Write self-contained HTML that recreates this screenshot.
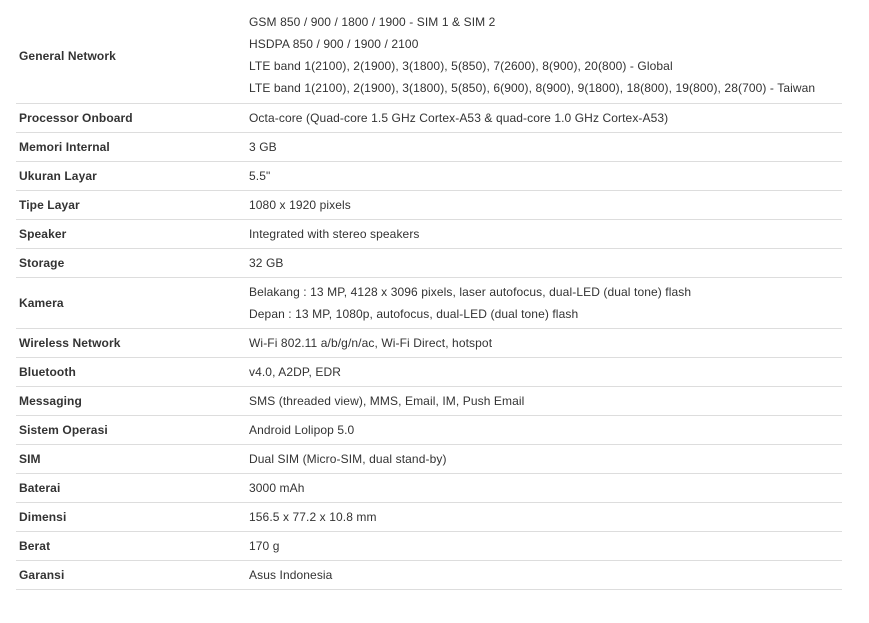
<!DOCTYPE html>
<html><head><style>
body{margin:0;background:#fff;font-family:"Liberation Sans",Arial,sans-serif;font-size:12px;color:#333}
table{position:absolute;left:16px;top:0;width:826px;border-collapse:collapse;font-size:12px;table-layout:fixed;letter-spacing:0.1px}
td{border-bottom:1px solid #ddd;padding:0 0 0 3px;height:28px;vertical-align:middle;white-space:nowrap;box-sizing:border-box}
td.k{font-weight:bold;width:230px}
.m{line-height:22px}
</style></head><body>
<table>
<tr><td class="k" style="height:103px;padding-top:10px">General Network</td><td class="m" style="height:103px;padding-top:8px">GSM 850 / 900 / 1800 / 1900 - SIM 1 &amp; SIM 2<br>HSDPA 850 / 900 / 1900 / 2100<br>LTE band 1(2100), 2(1900), 3(1800), 5(850), 7(2600), 8(900), 20(800) - Global<br>LTE band 1(2100), 2(1900), 3(1800), 5(850), 6(900), 8(900), 9(1800), 18(800), 19(800), 28(700) - Taiwan</td></tr>
<tr><td class="k" style="height:29px">Processor Onboard</td><td style="height:29px">Octa-core (Quad-core 1.5 GHz Cortex-A53 &amp; quad-core 1.0 GHz Cortex-A53)</td></tr>
<tr><td class="k" style="height:29px">Memori Internal</td><td style="height:29px">3 GB</td></tr>
<tr><td class="k" style="height:29px">Ukuran Layar</td><td style="height:29px">5.5"</td></tr>
<tr><td class="k" style="height:29px">Tipe Layar</td><td style="height:29px">1080 x 1920 pixels</td></tr>
<tr><td class="k" style="height:29px">Speaker</td><td style="height:29px">Integrated with stereo speakers</td></tr>
<tr><td class="k" style="height:29px">Storage</td><td style="height:29px">32 GB</td></tr>
<tr><td class="k" style="height:51px">Kamera</td><td class="m" style="height:51px">Belakang : 13 MP, 4128 x 3096 pixels, laser autofocus, dual-LED (dual tone) flash<br>Depan : 13 MP, 1080p, autofocus, dual-LED (dual tone) flash</td></tr>
<tr><td class="k" style="height:29px">Wireless Network</td><td style="height:29px">Wi-Fi 802.11 a/b/g/n/ac, Wi-Fi Direct, hotspot</td></tr>
<tr><td class="k" style="height:29px">Bluetooth</td><td style="height:29px">v4.0, A2DP, EDR</td></tr>
<tr><td class="k" style="height:29px">Messaging</td><td style="height:29px">SMS (threaded view), MMS, Email, IM, Push Email</td></tr>
<tr><td class="k" style="height:29px">Sistem Operasi</td><td style="height:29px">Android Lolipop 5.0</td></tr>
<tr><td class="k" style="height:29px">SIM</td><td style="height:29px">Dual SIM (Micro-SIM, dual stand-by)</td></tr>
<tr><td class="k" style="height:29px">Baterai</td><td style="height:29px">3000 mAh</td></tr>
<tr><td class="k" style="height:29px">Dimensi</td><td style="height:29px">156.5 x 77.2 x 10.8 mm</td></tr>
<tr><td class="k" style="height:29px">Berat</td><td style="height:29px">170 g</td></tr>
<tr><td class="k" style="height:29px">Garansi</td><td style="height:29px">Asus Indonesia</td></tr>
</table>
</body></html>
